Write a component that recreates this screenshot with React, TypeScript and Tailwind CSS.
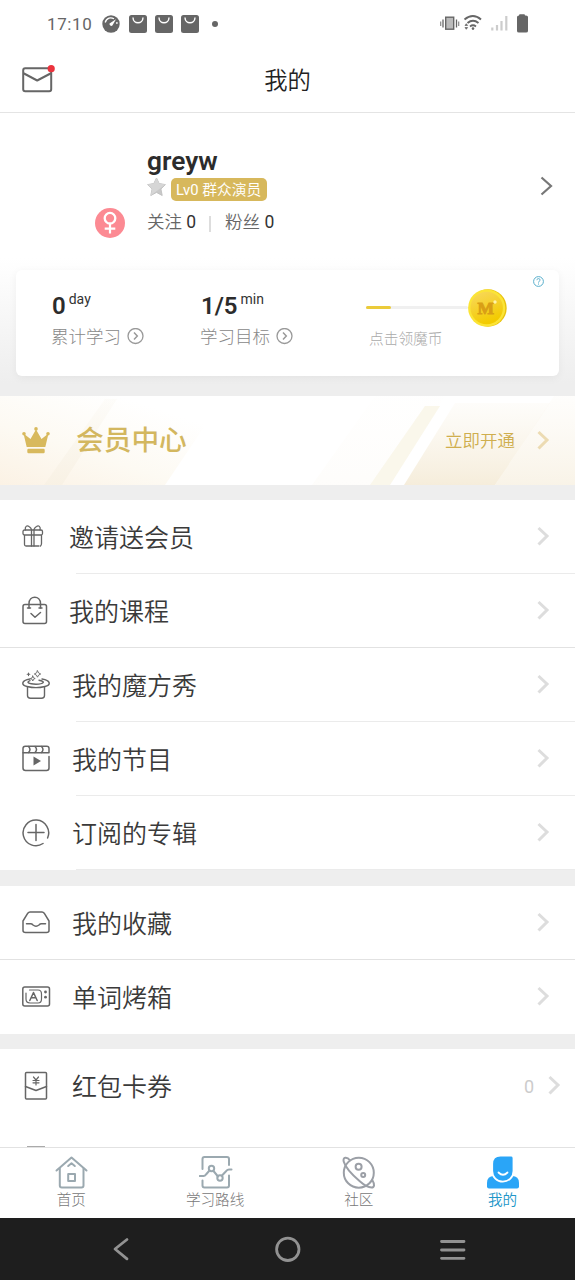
import type { ReactNode } from 'react';

const stroke = {
  fill: 'none',
  stroke: 'currentColor',
  strokeWidth: 1.5,
  strokeLinecap: 'round',
  strokeLinejoin: 'round',
} as const;

function Chevron({ className = '' }: { className?: string }) {
  return (
    <svg className={`mb-[2px] block h-[22px] w-[14px] shrink-0 ${className}`} viewBox="0 0 14 22">
      <path d="M2.5 3 L11 11 L2.5 19.5" fill="none" stroke="currentColor" strokeWidth="3" />
    </svg>
  );
}

function BagIcon() {
  return (
    <svg className="mr-2 block h-[18px] w-[18px]" viewBox="0 0 18 18">
      <rect width="18" height="18" rx="2.5" fill="#666" />
      <path d="M4 2.5 C4 9.5 14 9.5 14 2.5" fill="none" stroke="#fff" strokeWidth="1.4" />
    </svg>
  );
}

function StatusBar() {
  return (
    <div className="flex h-12 items-center pl-[47px] text-[#666]">
      <span className="w-[55px] pt-px text-[17px] tracking-[0.6px]">17:10</span>
      <svg className="mr-[9px] block h-[18px] w-[18px]" viewBox="0 0 18 18">
        <circle cx="9" cy="9" r="8.7" fill="#666" />
        <path d="M3.2 7.5 C4.5 2.5 9 2 12 3.8" fill="none" stroke="#fff" strokeWidth="1.3" />
        <path d="M14 4.2 L10.4 10.6 A1.9 1.9 0 0 1 7.5 8.6 Z" fill="#fff" />
        <path d="M14.9 7 V9" stroke="#fff" strokeWidth="1.2" />
      </svg>
      <BagIcon />
      <BagIcon />
      <BagIcon />
      <span className="ml-[5px] h-[6px] w-[6px] rounded-full bg-[#666]" />
      <svg className="ml-[222px] block h-5 w-[90px]" viewBox="0 0 90 20">
        <rect x="5.7" y="3.2" width="8" height="12" fill="#bbb" stroke="#666" strokeWidth="1.4" />
        <path d="M3 5.5 V13.5 M16.5 5.5 V13.5" stroke="#666" strokeWidth="1.3" />
        <path d="M.7 7.5 V12 M18.7 7.5 V12" stroke="#888" strokeWidth="1.2" />
        <g fill="none" stroke="#666" strokeWidth="1.9">
          <path d="M24.5 5.5 Q33 -1.5 41 5.5" />
          <path d="M27.5 9 Q33 4.5 38.5 9" />
          <path d="M30 12.4 Q33 10.2 36 12.4" />
        </g>
        <circle cx="33" cy="14.6" r="1.3" fill="#666" />
        <path d="M25 11.5 L26.3 9.7 L27.6 11.5 Z M25 13.5 L26.3 15.3 L27.6 13.5 Z" fill="#666" stroke="#666" strokeWidth=".7" />
        <path d="M52.3 13.5 V16.5 M57 11 V16.5 M61.5 7 V16.5 M66.3 2 V16.5" stroke="#ccc" strokeWidth="2.2" />
        <path d="M79 1.5 Q79 .3 80 .3 H84 Q85 .3 85 1.5 H86 Q88 1.5 88 3 V17 Q88 18.5 86 18.5 H79 Q77 18.5 77 17 V3 Q77 1.5 79 1.5 Z" fill="#666" />
      </svg>
    </div>
  );
}

function Header() {
  return (
    <header className="grid h-[65px] grid-cols-3 items-center border-b border-[#e4e4e4]">
      <svg className="ml-[22px] block h-8 w-[34px]" viewBox="0 0 34 32">
        <g {...stroke} stroke="#666" strokeWidth="2">
          <rect x="1.2" y="4.2" width="28" height="23" rx="2" />
          <path d="M2 9.5 L15.2 16.5 L28.5 9.5" />
        </g>
        <circle cx="29.2" cy="4.7" r="3.6" fill="#eb333d" />
      </svg>
      <h1 className="pt-[3px] text-center text-[23.3px] font-[350] text-[#222]">我的</h1>
    </header>
  );
}

function Profile() {
  return (
    <div className="flex h-[157px] items-start">
      <svg className="ml-[95px] mt-[95px] block h-[30px] w-[30px]" viewBox="0 0 30 30">
        <circle cx="15" cy="15" r="15" fill="#fc8a93" />
        <circle cx="15" cy="10.2" r="5.3" fill="none" stroke="#fff" strokeWidth="2.3" />
        <path d="M15 15.5 V25.5 M9.7 20.7 H20.3" stroke="#fff" strokeWidth="2.2" />
      </svg>
      <div className="ml-[22px] mt-[33px]">
        <div className="h-8 text-[26.3px] font-semibold leading-[30px] text-[#2c2c2c]">greyw</div>
        <div className="flex h-[23px]">
          <svg className="mr-[5px] block h-5 w-[19px]" viewBox="0 0 19 20">
            <path d="M9.5 0 L12.2 5.6 L18.4 6.6 L13.9 11 L15.2 17.5 L9.5 14.4 L3.8 17.5 L5.1 11 L.6 6.6 L6.8 5.6 Z" fill="#c8c8c8" stroke="#c2c2c2" strokeLinejoin="round" />
            <path d="M9.5 0 L12.2 5.6 L18.4 6.6 L3.8 17.5 L5.1 11 L.6 6.6 L6.8 5.6 Z" fill="#d6d6d6" />
          </svg>
          <span className="h-[23px] w-24 whitespace-nowrap rounded-[5px] bg-[#d7b85c] pl-[5px] pt-px text-[14.8px] leading-[23px] text-white">
            Lv0 <span className="font-[350]">群众演员</span>
          </span>
        </div>
        <div className="mt-[9px] flex h-6 items-center whitespace-pre text-[17.5px] font-[350] leading-6 text-[#666]">
          <span>关注 <span className="font-normal text-[#333]">0</span></span>
          <span className="ml-[13px] mr-[14px] mt-1 h-4 w-[2px] bg-[#ddd]" />
          <span>粉丝 <span className="font-normal text-[#333]">0</span></span>
        </div>
      </div>
      <svg className="ml-auto mr-[21px] mt-[62px] block h-[22px] w-[15px]" viewBox="0 0 15 22">
        <path d="M2.5 2.5 L12 11 L2.5 19.5" fill="none" stroke="#777" strokeWidth="2.2" />
      </svg>
    </div>
  );
}

function Stat({ value, unit, label }: { value: string; unit: string; label: string }) {
  return (
    <div className="w-[149px] pt-[21px]">
      <div className="flex h-[30px] items-start">
        <span className="text-[24px] font-semibold leading-[30px] text-[#2c2c2c]">{value}</span>
        <span className="ml-[3px] text-[14px] leading-[17px] text-[#333]">{unit}</span>
      </div>
      <div className="mt-[3px] flex h-6 items-center text-[17.5px] font-light leading-6 text-[#888]">
        <span className="-ml-px pt-px">{label}</span>
        <svg className="ml-[6px] block h-[17px] w-[17px]" viewBox="0 0 17 17">
          <circle cx="8.5" cy="8" r="7.5" fill="none" stroke="#999" strokeWidth="1.3" />
          <path d="M7 4.5 L10.3 8 L7 11.5" fill="none" stroke="#999" strokeWidth="1.5" />
        </svg>
      </div>
    </div>
  );
}

function StudyCard() {
  return (
    <div className="mx-4 flex h-[106px] rounded-md bg-white pl-9 shadow-[0_2px_8px_rgba(0,0,0,0.05)]">
      <Stat value="0" unit="day" label="累计学习" />
      <Stat value="1/5" unit="min" label="学习目标" />
      <div className="ml-4 pt-[18px]">
        <div className="flex h-10 items-center">
          <div className="mt-[-2px] h-[3px] w-[102px] rounded-full bg-[#f0f0f0]">
            <div className="h-full w-[25px] rounded-full bg-[#ebcb3a]" />
          </div>
          <svg className="block h-10 w-10" viewBox="0 0 40 40">
            <defs>
              <linearGradient id="coin" x1="0" y1="0" x2="0.4" y2="1">
                <stop offset="0" stopColor="#f8d860" />
                <stop offset="1" stopColor="#f3cb00" />
              </linearGradient>
            </defs>
            <circle cx="20" cy="20" r="18.7" fill="#e9c20d" />
            <circle cx="18.7" cy="20" r="18.6" fill="#fbe436" />
            <circle cx="18.7" cy="20" r="16.2" fill="url(#coin)" />
            <text x="17.8" y="26.2" textAnchor="middle" fontFamily="Liberation Serif, serif" fontWeight="700" fontSize="17.5" fill="#d99f16" stroke="#d99f16" strokeWidth="0.9">M</text>
            <circle cx="27" cy="14" r="1.7" fill="#fff3a8" />
          </svg>
        </div>
        <div className="ml-[3px] mt-px text-[14.7px] font-light leading-[20px] text-[#aaa]">点击领魔币</div>
      </div>
      <svg className="ml-auto mr-[15px] mt-[6px] block h-[11px] w-[11px]" viewBox="0 0 11 11">
        <circle cx="5.5" cy="5.5" r="4.9" fill="none" stroke="#58aecb" strokeWidth="1" />
        <path d="M3.9 4.2 C3.9 2 7.1 2.2 7.1 4 C7.1 5.2 5.5 5.2 5.5 6.6 M5.5 7.5 V8.6" fill="none" stroke="#58aecb" strokeWidth="1" />
      </svg>
    </div>
  );
}

function MemberBanner() {
  return (
    <div className="relative flex h-[89px] items-center bg-white">
      <svg className="absolute inset-0 h-full w-full" viewBox="0 0 575 89" preserveAspectRatio="none">
        <defs>
          <linearGradient id="warm" x1="0" y1="0" x2="0" y2="1">
            <stop offset="0" stopColor="#f7f0e0" stopOpacity="0.15" />
            <stop offset="1" stopColor="#f5ecd9" stopOpacity="0.95" />
          </linearGradient>
          <linearGradient id="warmLeft" gradientUnits="userSpaceOnUse" x1="0" y1="95" x2="45" y2="-40">
            <stop offset="0" stopColor="#fbf1e3" />
            <stop offset="0.45" stopColor="#fdfaf3" />
            <stop offset="0.9" stopColor="#fff" />
          </linearGradient>
          <linearGradient id="band" x1="0" y1="0" x2="0" y2="1">
            <stop offset="0" stopColor="#faf7f0" stopOpacity="0.3" />
            <stop offset="1" stopColor="#f8f1e4" stopOpacity="0.95" />
          </linearGradient>
        </defs>
        <path d="M0 0 H225 L165 89 H0 Z" fill="url(#warmLeft)" />
        <path d="M105 3 H117 L62 89 H44 Z" fill="url(#band)" />
        <path d="M375 0 H445 L390 89 H312 Z" fill="url(#warm)" opacity="0.12" />
        <path d="M425 10 H440 L390 89 H370 Z" fill="#f9f6e8" opacity="0.85" />
        <path d="M455 7 H550 L495 89 H404 Z" fill="url(#warm)" />
        <path d="M554 0 H575 V89 H495 Z" fill="url(#warm)" opacity="0.65" />
      </svg>
      <svg className="relative ml-[22px] block h-7 w-7" viewBox="0 0 28 28">
        <g fill="#d8b95d">
          <path d="M1.5 6.5 L8.5 12 L14 2.5 L19.5 12 L26.5 6.5 L23.3 20 H4.7 Z" />
          <circle cx="2" cy="6.8" r="1.8" />
          <circle cx="14" cy="1.9" r="1.8" />
          <circle cx="26" cy="6.8" r="1.8" />
          <rect x="5.3" y="21.8" width="17.4" height="4.5" rx="1.2" />
        </g>
      </svg>
      <span className="relative ml-[26px] pt-px text-[27.7px] font-medium leading-9 text-[#d3b75f]">会员中心</span>
      <span className="relative ml-auto text-[17.5px] font-[350] leading-6 text-[#cfae4e]">立即开通</span>
      <Chevron className="relative ml-[21px] mr-[25px] text-[#ecdbb2]" />
    </div>
  );
}

const giftIcon = (
  <svg className="block h-[30px] w-[30px]" viewBox="0 0 30 30">
    <g {...stroke} strokeWidth="1.3">
      <rect x="1" y="8" width="19.5" height="5" rx="1.5" />
      <path d="M2.5 13.5 V22.5 Q2.5 24 4 24 H17 M19.5 13.5 V21.5 Q19.5 23 18.5 24" />
      <path d="M9.5 8 V24 M12 8 V24" />
      <path d="M3.5 8 C2.5 4.5 5 3 7 4.5 Q9 5.8 9.5 7.5 M18 8 C19 4.5 16.5 3 14.5 4.5 Q12.5 5.8 12 7.5" />
    </g>
  </svg>
);

const courseIcon = (
  <svg className="block h-[30px] w-[30px]" viewBox="0 0 30 30">
    <g {...stroke}>
      <rect x="1" y="8.5" width="23.5" height="19" rx="2" />
      <path d="M7 12 V7.5 C7 -1 18.5 -1 18.5 7.5 V12" />
      <path d="M5.5 12 H8.5 M17 12 H20" />
      <path d="M9 17.5 L13 21.3 L18.5 16.5" />
    </g>
  </svg>
);

const hatIcon = (
  <svg className="block h-[30px] w-[30px]" viewBox="0 0 30 30">
    <g {...stroke} strokeWidth="1.4">
      <path d="M8 9 C-1 10.5 -1 15 5 16.5 Q14 18.8 23 16.5 C29 15 29 10.5 20 9" />
      <path d="M8 10.7 C4 12 6 14.2 14 14.2 C22 14.2 24 11.5 17 10.2" />
      <path d="M5.5 17 V25.5 Q5.5 28.2 8.5 28.2 H19.5 Q22.5 28.2 22.5 25.5 V17" />
      <path d="M6.5 3 V5.6 M5.2 4.3 H7.8" strokeWidth="1.1" />
      <path d="M15.5 .8 L16.6 2.9 L18.7 4 L16.6 5.1 L15.5 7.2 L14.4 5.1 L12.3 4 L14.4 2.9 Z M10.8 6 L11.5 7.8 L13.2 8.5 L11.5 9.2 L10.8 11 L10 9.2 L8.4 8.5 L10 7.8 Z" strokeWidth=".9" />
    </g>
  </svg>
);

const showIcon = (
  <svg className="block h-[30px] w-[30px]" viewBox="0 0 30 30">
    <g {...stroke}>
      <path d="M1 4.5 Q1 2.3 3.3 2.3 H24.7 Q27 2.3 27 4.5 V8.7 H1 Z" />
      <path d="M1 8.7 V24 Q1 26.5 3.5 26.5 H24.5 Q27 26.5 27 24 V12.5" />
      <path d="M6.5 2.5 Q9.5 5.5 6.5 8.5 M13 2.5 Q16 5.5 13 8.5 M19.5 2.5 Q22.5 5.5 19.5 8.5" />
    </g>
    <path d="M11.5 12.5 L19 17 L11.5 21.5 Z" fill="currentColor" />
  </svg>
);

const subscribeIcon = (
  <svg className="block h-[30px] w-[30px]" viewBox="0 0 30 30">
    <g {...stroke}>
      <path d="M21 25.5 A12.8 12.8 0 1 1 25.6 20" />
      <path d="M14 6.5 V22.5 M6 14.5 H22" />
    </g>
  </svg>
);

const trayIcon = (
  <svg className="block h-[30px] w-[30px]" viewBox="0 0 30 30">
    <g {...stroke}>
      <path d="M8 4 H20 Q21.3 4 22.2 5.2 L27 13 V22.5 Q27 24.5 24.5 24.5 H3.5 Q1 24.5 1 22.5 V13 L5.8 5.2 Q6.7 4 8 4 Z" />
      <path d="M4.5 15.8 H8.5 Q10 15.8 11 17 Q14 19.3 17 17 Q18 15.8 19.5 15.8 H23.5" />
    </g>
  </svg>
);

const ovenIcon = (
  <svg className="block h-[30px] w-[30px]" viewBox="0 0 30 30">
    <g {...stroke}>
      <rect x=".8" y="5" width="26.7" height="19" rx="2" />
      <path d="M7.5 8 H16 Q19.5 8 19.5 12 V17 Q19.5 21 16 21 H8 Q4 21 4 17 V11" strokeWidth="1.2" />
      <path d="M7.8 18.5 L11.5 10.5 L15.2 18.5 M9.2 15.8 H13.8" />
    </g>
    <circle cx="23.5" cy="10" r="1.4" fill="currentColor" />
    <circle cx="23.5" cy="15.2" r="1.4" fill="currentColor" />
  </svg>
);

const couponIcon = (
  <svg className="block h-[30px] w-[30px]" viewBox="0 0 30 30">
    <g {...stroke}>
      <rect x="3.5" y="1.5" width="21" height="26.5" rx="1" />
      <path d="M3.5 15.5 L14 19.5 L24.5 15.5" />
      <path d="M11.5 6 L14 9 L16.5 6 M14 9 V14 M11 9.5 H17 M11 11.8 H17" strokeWidth="1.2" />
    </g>
  </svg>
);

type RowProps = {
  icon: ReactNode;
  label: string;
  inset?: boolean;
  count?: string;
  divider?: 'full' | 'part' | 'none';
};

function Row({ icon, label, inset, count, divider = 'part' }: RowProps) {
  return (
    <div className="bg-white">
      <div className="flex h-[73px] items-center pl-[22px]">
        <span className="text-[#666]">{icon}</span>
        <span className={`pt-[5px] text-[25px] font-[350] leading-[36px] text-[#3a3a3a] ${inset ? 'ml-5' : 'ml-[17px]'}`}>
          {label}
        </span>
        {count && <span className="ml-auto mr-[13px] pt-[2px] text-[18px] text-[#ccc]">{count}</span>}
        <Chevron className={`text-[#ddd] ${count ? 'mr-[14px]' : 'ml-auto mr-[25px]'}`} />
      </div>
      {divider === 'part' && <div className="ml-[76px] h-px bg-[#ebebeb]" />}
      {divider === 'full' && <div className="h-px bg-[#e2e2e2]" />}
      {divider === 'none' && <div className="h-px bg-white" />}
    </div>
  );
}

function TabBar() {
  return (
    <nav className="grid h-[71px] grid-cols-4 border-t border-[#e2e2e2] bg-white text-[14.6px] font-light leading-[18px] text-[#777]">
      <div className="flex flex-col items-center pt-2">
        <svg className="mb-[1px] block h-[34px] w-[34px] text-[#9ba9b0]" viewBox="0 0 34 34">
          <g {...stroke} strokeWidth="2">
            <path d="M1.5 14.5 L16.5 1.5 L31.5 14.5" />
            <path d="M4.8 12.5 V29.5 Q4.8 31.5 6.8 31.5 H26.5 Q28.5 31.5 28.5 29.5 V12.5" />
            <path d="M13.2 10 L16.5 7.3 L19.8 10" />
            <rect x="13.2" y="18" width="6.8" height="7" />
          </g>
        </svg>
        <span className="-ml-px">首页</span>
      </div>
      <div className="flex flex-col items-center pt-2">
        <svg className="mb-[1px] block h-[34px] w-[34px] text-[#9ba9b0]" viewBox="0 0 34 34">
          <g {...stroke} strokeWidth="2">
            <path d="M3.5 13 V3 Q3.5 1 5.5 1 H28 Q30 1 30 3 V9" />
            <path d="M3.5 24.5 V29.5 Q3.5 31.5 5.5 31.5 H28 Q30 31.5 30 29.5 V19.5" />
            <path d="M.8 20 H4.5 Q6 20 7 18.5 L10.5 14.5 M14.5 15 L19 20.5 M23 19.5 L27.5 14.7 Q28.5 13.5 30 13.5 H32.5" />
            <circle cx="12.5" cy="12.5" r="2.7" />
            <circle cx="21" cy="22" r="2.7" />
          </g>
        </svg>
        <span className="-ml-px">学习路线</span>
      </div>
      <div className="flex flex-col items-center pt-2">
        <svg className="mb-[1px] block h-[34px] w-[34px] text-[#9b9fa6]" viewBox="0 0 34 34">
          <g {...stroke} strokeWidth="2">
            <circle cx="16.8" cy="16.7" r="15" />
            <path d="M8 4.3 C5 .5 .5 1 1.7 5.5 C3.5 12 10.5 19 17.5 25 C22 29 26 31.5 29.5 31.5 C32.7 31.5 32.7 28 30.5 24.5" />
            <circle cx="16.6" cy="10.7" r="3" />
            <circle cx="21.2" cy="18.9" r="2" />
          </g>
        </svg>
        <span className="-ml-px">社区</span>
      </div>
      <div className="flex flex-col items-center pt-2 font-[350] text-[#2196c8]">
        <svg className="mb-[1px] block h-[34px] w-[34px]" viewBox="0 0 34 34">
          <path d="M1 30.5 V27 Q1 20 8 20 H26 Q33 20 33 27 V30.5 Q33 32.5 31 32.5 H3 Q1 32.5 1 30.5 Z" fill="#2aa5f7" />
          <path d="M6.2 8 Q6.2 -.3 14.5 -.3 H25 Q27.5 -.3 27.5 2 V15 A10.6 10.6 0 0 1 6.2 15 Z" fill="#2aa5f7" stroke="#fff" strokeWidth="1.8" />
          <path d="M12.5 16.5 Q17 21 21.5 16.5" fill="none" stroke="#fff" strokeWidth="1.8" strokeLinecap="round" />
        </svg>
        <span className="-ml-px">我的</span>
      </div>
    </nav>
  );
}

function SystemNav() {
  return (
    <div className="h-[62px] bg-[#1e1e1e]">
      <svg className="block h-[62px] w-full" viewBox="0 0 575 62">
        <g fill="none" stroke="#929292" strokeWidth="2.8" strokeLinecap="round" strokeLinejoin="round">
          <path d="M127 21.5 L115 31 L127 40.8" />
          <circle cx="287.8" cy="31.3" r="11.2" />
          <path d="M441.5 23.5 H464 M441.5 32 H464 M441.5 40.3 H464" />
        </g>
      </svg>
    </div>
  );
}

export default function App() {
  return (
    <div className="flex h-[1280px] w-[575px] flex-col overflow-hidden bg-white font-[Roboto,'Noto_Sans_CJK_SC',sans-serif]">
      <StatusBar />
      <Header />
      <main className="h-[1034px] overflow-hidden bg-[#eee]">
        <section className="h-[283px] bg-[linear-gradient(#fff_0,#fff_145px,#eee_270px)]">
          <Profile />
          <StudyCard />
        </section>
        <MemberBanner />
        <div className="mt-[15px]">
          <Row icon={giftIcon} label="邀请送会员" />
          <Row icon={courseIcon} label="我的课程" divider="full" />
          <Row icon={hatIcon} label="我的魔方秀" inset />
          <Row icon={showIcon} label="我的节目" inset />
          <Row icon={subscribeIcon} label="订阅的专辑" inset />
        </div>
        <div className="mt-4">
          <Row icon={trayIcon} label="我的收藏" inset divider="full" />
          <Row icon={ovenIcon} label="单词烤箱" inset divider="none" />
        </div>
        <div className="mt-[15px] h-[98px] bg-white">
          <Row icon={couponIcon} label="红包卡券" inset count="0" divider="none" />
          <div className="ml-[27px] mt-[23px] h-[2px] w-[18px] bg-[#aaa]" />
        </div>
      </main>
      <TabBar />
      <SystemNav />
    </div>
  );
}
